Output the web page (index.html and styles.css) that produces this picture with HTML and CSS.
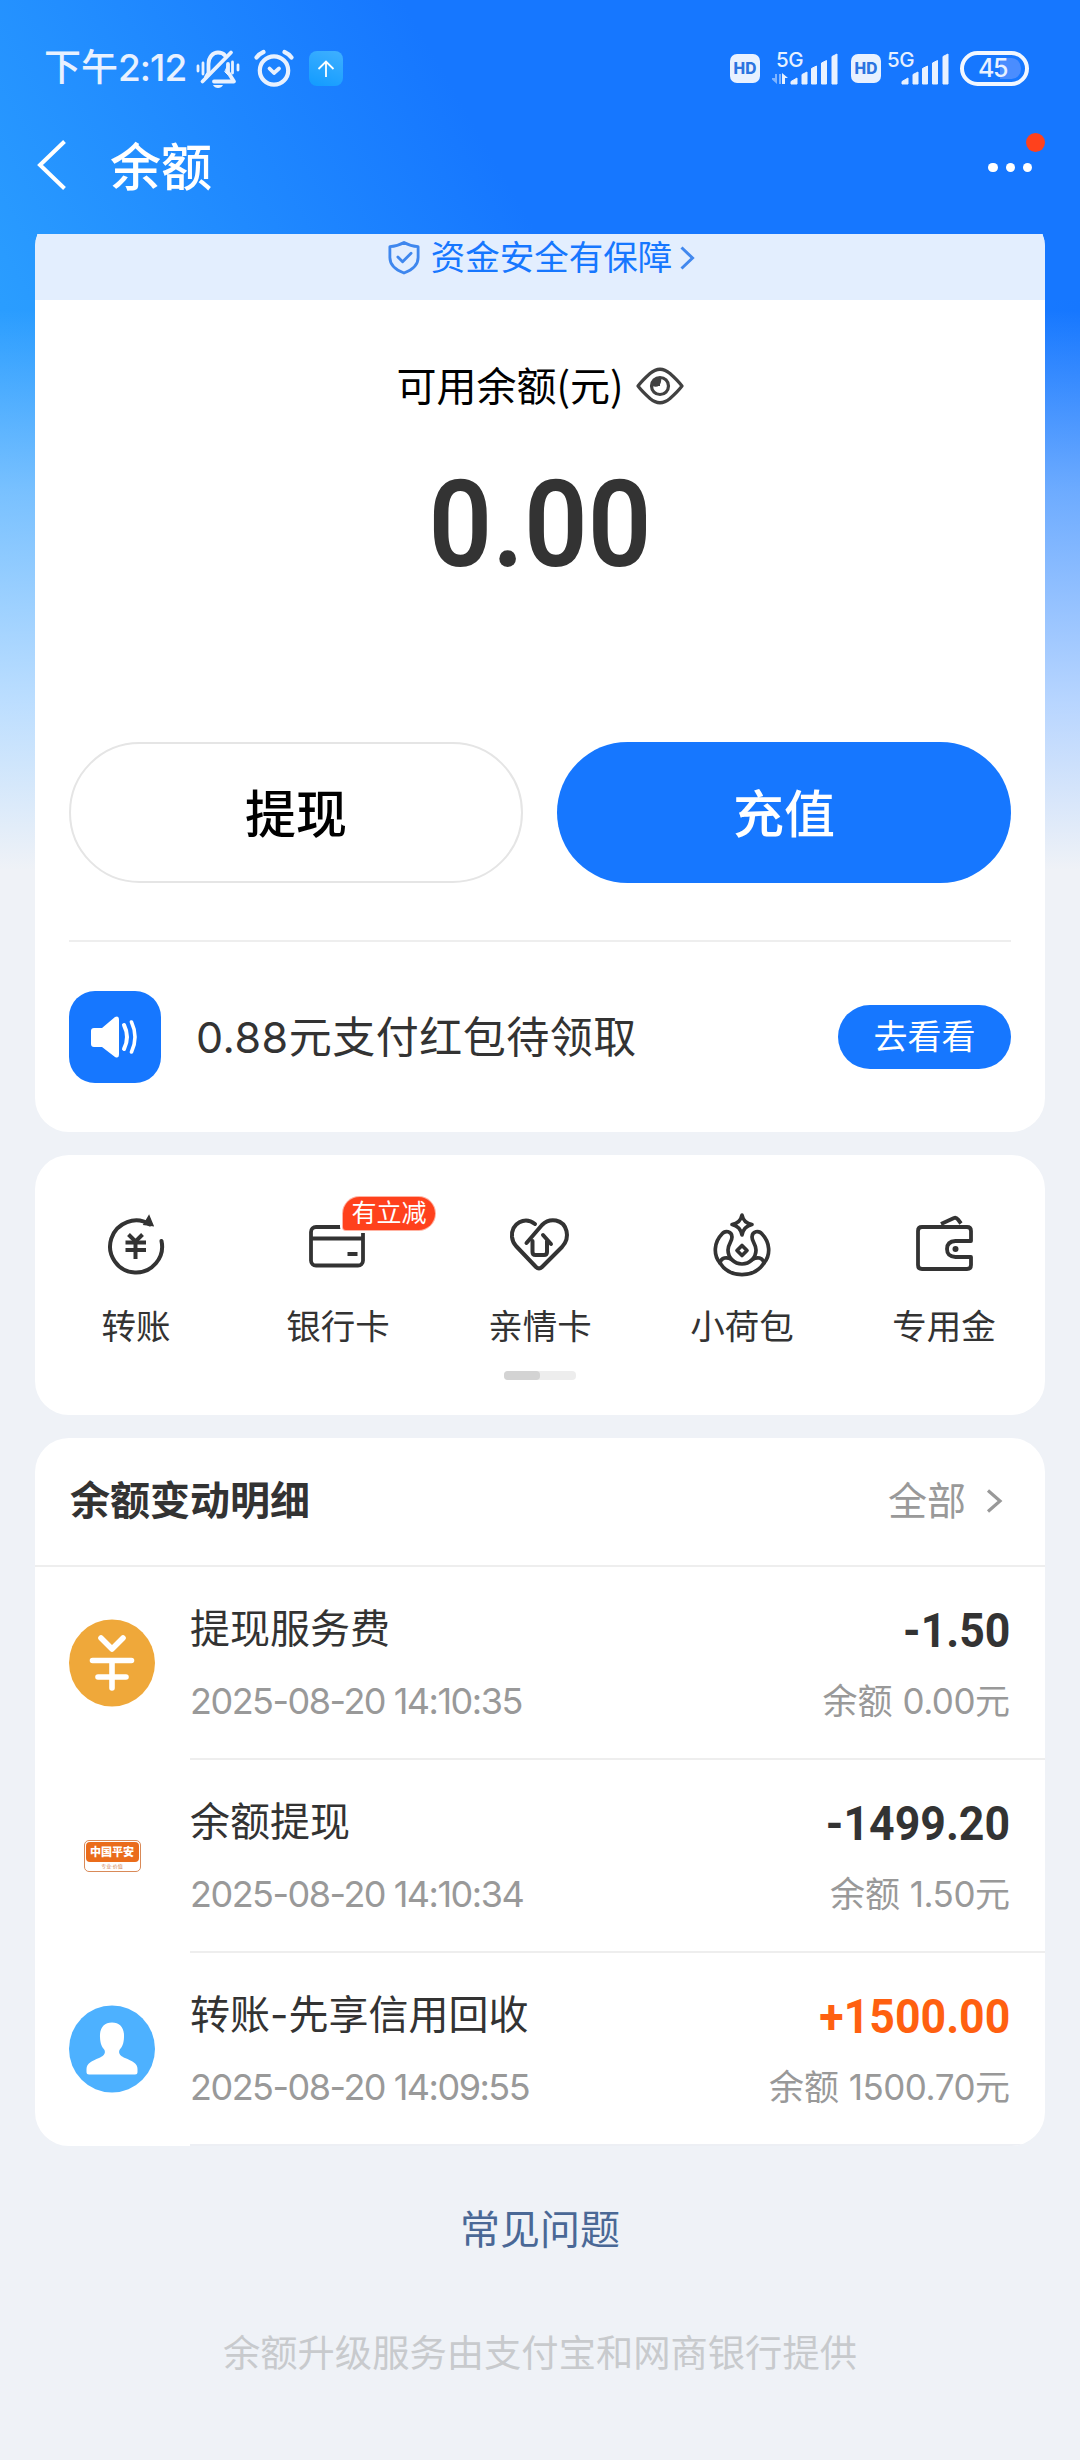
FILE: index.html
```html
<!DOCTYPE html>
<html lang="zh-CN">
<head>
<meta charset="utf-8">
<title>余额</title>
<link rel="stylesheet" href="styles.css">
</head>
<body>
<div class="screen">
  <header class="status">
    <div class="status-left">
      <span class="clock">下午<span class="clock-num">2:12</span></span>
      <svg class="i-bell" width="46" height="40" viewBox="0 0 46 40" fill="none" stroke="#e8f1ff" stroke-width="3.8" stroke-linecap="round" stroke-linejoin="round">
        <path d="M11 28 L13.500 24 V15 C13.500 8 18 3.500 23 3.500 C26 3.500 28.500 4.500 30 6.500 M33 15 V23 L39 32.500 H19"/>
        <path d="M36 3.500 L7.500 32.500"/>
        <path d="M18 36 H28 Q26.500 39 23 39 Q19.500 39 18 36Z" fill="#e8f1ff" stroke="none"/>
        <path d="M8 14 V25 M3 17 V22 M37.500 13 V24 M43 16 V21" stroke-width="2.800"/>
        <path d="M33 16 V26 L30 23 Z" fill="#e8f1ff" stroke-width="1"/>
      </svg>
      <svg class="i-alarm" width="40" height="40" viewBox="0 0 40 40" fill="none" stroke="#e8f1ff" stroke-width="4.2" stroke-linecap="round" stroke-linejoin="round">
        <circle cx="20" cy="21.500" r="14.200"/>
        <path d="M2.500 8.500 Q5 5 9.500 3 M37.500 8.500 Q35 5 30.500 3"/>
        <path d="M15.500 19.500 L20 24 L25 19.500" stroke-width="3.800"/>
      </svg>
      <span class="app-badge"><svg width="20" height="20" viewBox="0 0 20 20" fill="none" stroke="#fff" stroke-width="1.800"><path d="M10 18 V3 M2.500 10 L10 2.500 L17.500 10"/></svg></span>
    </div>
    <div class="status-right">
      <span class="hd">HD</span>
      <span class="net net-a"><span class="net-label">5G</span>
        <svg width="68" height="34" viewBox="0 0 68 34" fill="#e8f1ff">
          <path d="M5 22 V32 L0 27.500 V26 H3 V22Z" opacity=".5"/><path d="M7 22 h2 v10 h-2z" opacity=".5"/><path d="M10 21 L16 26 H13 V32 H10Z"/>
          <path d="M19 32 V29.500 L25 26 V32Z M30 32 V22.500 L35 20 V32Z M39.500 32 V16.500 L44.500 14 V32Z M49.500 32 V11 L54.500 8.500 V32Z M60 32 V4.500 L65 2 V32Z" stroke="#e8f1ff" stroke-width="1" stroke-linejoin="round"/>
        </svg>
      </span>
      <span class="hd">HD</span>
      <span class="net net-b"><span class="net-label">5G</span>
        <svg width="68" height="34" viewBox="0 0 68 34" fill="#e8f1ff">
          <path d="M19 32 V29.500 L25 26 V32Z M30 32 V22.500 L35 20 V32Z M39.500 32 V16.500 L44.500 14 V32Z M49.500 32 V11 L54.500 8.500 V32Z M60 32 V4.500 L65 2 V32Z" stroke="#e8f1ff" stroke-width="1" stroke-linejoin="round"/>
        </svg>
      </span>
      <span class="battery"><span class="battery-text">45</span></span>
    </div>
  </header>
  <nav class="nav">
    <svg class="back" width="30" height="50" viewBox="0 0 30 50" fill="none" stroke="#fff" stroke-width="4"><path d="M27.500 1.500 L3 25 L27.500 48.500"/></svg>
    <h1 class="nav-title">余额</h1>
    <span class="more"><i class="dot"></i><i class="dot"></i><i class="dot"></i><i class="red-dot"></i></span>
  </nav>
  <main class="content">
    <section class="card balance">
      <div class="banner">
        <svg width="32" height="35" viewBox="0 0 34 36" fill="none" stroke="#3f87ee" stroke-width="3" stroke-linejoin="round"><path d="M17 2 Q24 6 32 6.500 V18 C32 26 25 31.500 17 34.500 C9 31.500 2 26 2 18 V6.500 Q10 6 17 2Z"/><path d="M10.500 17.500 L15.500 22.500 L24.500 13.500" stroke-linecap="round"/></svg>
        <span class="banner-text">资金安全有保障</span>
        <svg class="banner-arrow" width="15" height="24" viewBox="0 0 15 24" fill="none" stroke="#4288ee" stroke-width="3"><path d="M1.500 1.500 L12.500 12 L1.500 22.500"/></svg>
      </div>
      <div class="label-row">
        <span class="label">可用余额(元)</span>
        <svg width="48" height="38" viewBox="0 0 48 38" fill="none" stroke="#414141" stroke-width="3.200" stroke-linejoin="round"><path d="M2 19 C5 15 9 11 14 6.500 Q24 -2 34 6.500 C39 11 43 15 46 19 C43 23 39 27 34 31.500 Q24 40 14 31.500 C9 27 5 23 2 19Z"/><circle cx="24" cy="19" r="8.500"/><path d="M24 11 V19 H16 A8 8 0 0 1 24 11Z" fill="#414141" stroke="none"/><path d="M17 18 Q24 20 24 12" stroke-width="2.500"/></svg>
      </div>
      <div class="amount">0.00</div>
      <div class="buttons">
        <a class="btn btn-line">提现</a>
        <a class="btn btn-fill">充值</a>
      </div>
      <div class="notice">
        <span class="horn"><svg width="50" height="46" viewBox="0 0 50 46" fill="none" stroke="#fff"><path d="M4 14 H12 L25 3 Q29 1 29 6 V40 Q29 45 25 43 L12 33 H4 Q1 33 1 30 V17 Q1 14 4 14Z" fill="#fff" stroke="none"/><path d="M34 11 Q40 23 34 35" stroke-width="4" stroke-linecap="round"/><path d="M41.500 8 Q48.500 23 41.500 38" stroke-width="3.600" stroke-linecap="round"/></svg></span>
        <span class="notice-text">0.88元支付红包待领取</span>
        <a class="pill">去看看</a>
      </div>
    </section>

    <section class="card tools">
      <div class="tool-row">
        <div class="tool">
          <svg width="64" height="64" viewBox="0 0 64 64" fill="none" stroke="#333" stroke-width="4" stroke-linecap="round"><path d="M57.500 28 A26 26 0 1 1 46 11.500"/><path d="M45 3 L49 12.500 L40 11.500Z" fill="#333" stroke-width="1.500"/><path d="M24.500 21.500 L31.500 28.500 L38.500 21.500 M31.500 28 V46" stroke-linecap="butt"/><path d="M21.500 29.500 H42 M21.500 37 H42" stroke-linecap="butt"/></svg>
          <span>转账</span>
        </div>
        <div class="tool">
          <svg width="64" height="64" viewBox="0 0 64 64" fill="none" stroke="#333" stroke-width="3.800"><rect x="5" y="14" width="52" height="38.500" rx="5"/><path d="M5 25.500 H57"/><path d="M41.500 41 H51.500" stroke-width="4"/></svg>
          <span>银行卡</span>
          <b class="tag">有立减</b>
        </div>
        <div class="tool">
          <svg width="64" height="64" viewBox="0 0 64 64" fill="none" stroke="#333" stroke-width="4" stroke-linecap="round" stroke-linejoin="round"><path d="M27 11 C17 3 3 10 4 24 Q4.500 29 8 33 L28 54 Q31 57 34 54 L54 34 C63 24 59 10 48 7.500 Q40 6 34 12 L18.500 30"/><path d="M35 22 L43 31 M24.500 28 V39 Q24.500 42 27.500 42 H36 Q39 42 39 39 V28"/></svg>
          <span>亲情卡</span>
        </div>
        <div class="tool">
          <svg width="64" height="66" viewBox="0 0 64 66" fill="none" stroke="#333" stroke-width="3.700" stroke-linecap="round" stroke-linejoin="round"><path d="M32 3 Q33.500 11 42 12.500 Q33.500 14.500 32 23 Q30.500 14.500 22 12.500 Q30.500 11 32 3Z"/><path d="M22 25 C22 19 15 18 12 22 C4 30 3 43 10 51 C20 66.500 44 66.500 54 51 C61 43 60 30 52 22 C49 18 42 19 42 25 C42 30 46 32 46 38 A14 14 0 0 1 18 38 C18 32 22 30 22 25Z" stroke="none"/><path d="M22 25 C22 19 15 18 12 22 C4 30 3 43 10 51 C20 66.500 44 66.500 54 51 C61 43 60 30 52 22 C49 18 42 19 42 25 C42 30 46 32 46 38 A14 14 0 0 1 18 38 C18 32 22 30 22 25Z"/><path d="M10 51 C11 45.500 17 44.500 21.500 47.500 M54 51 C53 45.500 47 44.500 42.500 47.500"/><path d="M32 33.500 L37 38.500 L32 43.500 L27 38.500Z"/></svg>
          <span>小荷包</span>
        </div>
        <div class="tool">
          <svg width="64" height="64" viewBox="0 0 64 64" fill="none" stroke="#333" stroke-width="3.800" stroke-linejoin="round"><path d="M59 28 H43.500 Q35 28.500 35 36 Q35 43.500 43.500 44 H59 V52 Q59 56 55 56 H10 Q6 56 6 52 V18 Q6 14 10 14 H55 Q59 14 59 18Z"/><path d="M29 11 L42 5 Q44 4 46 6.500 L49 10.500"/><circle cx="43.500" cy="36" r="3" fill="#333" stroke="none"/></svg>
          <span>专用金</span>
        </div>
      </div>
      <div class="pager"><i></i></div>
    </section>

    <section class="card history">
      <div class="history-head">
        <h2>余额变动明细</h2>
        <span class="all">全部<svg width="17" height="24" viewBox="0 0 17 24" fill="none" stroke="#999" stroke-width="3.200"><path d="M2 1.500 L14 12 L2 22.500"/></svg></span>
      </div>
      <div class="item">
        <svg class="avatar" width="86" height="90" viewBox="0 0 86 90"><ellipse cx="43" cy="45" rx="43" ry="43.500" fill="#efa83a"/><path d="M32 20 L43 31 L54 20 M23.500 42.500 H62.500 M29 59 H57 M43 43 V70" fill="none" stroke="#fff" stroke-width="5.600" stroke-linecap="round" stroke-linejoin="round"/></svg>
        <div class="item-body">
          <div class="line1"><span>提现服务费</span><span class="sum">-1.50</span></div>
          <div class="line2"><span class="time">2025-08-20 14:10:35</span><span>余额 <span class="num">0.00</span>元</span></div>
        </div>
      </div>
      <div class="item">
        <div class="avatar bank"><div class="bank-card"><span class="bank-name">中国平安</span><span class="bank-sub">专业·价值</span></div></div>
        <div class="item-body">
          <div class="line1"><span>余额提现</span><span class="sum">-1499.20</span></div>
          <div class="line2"><span class="time">2025-08-20 14:10:34</span><span>余额 <span class="num">1.50</span>元</span></div>
        </div>
      </div>
      <div class="item">
        <svg class="avatar" width="86" height="90" viewBox="0 0 86 90"><ellipse cx="43" cy="45" rx="43" ry="43.500" fill="#4db1ff"/><path d="M43 18.500 C51 18.500 55.500 24 55 33 C54.800 40 53 43 50.500 46 C49 50 52 52 56 54 C63 57 68.500 59 68.500 65 V68 Q68.500 70.500 66 70.500 H20 Q17.500 70.500 17.500 68 V65 C17.500 59 23 57 30 54 C34 52 37 50 35.500 46 C33 43 31.200 40 31 33 C30.500 24 35 18.500 43 18.500Z" fill="#fff"/></svg>
        <div class="item-body">
          <div class="line1"><span>转账-先享信用回收</span><span class="sum income">+1500.00</span></div>
          <div class="line2"><span class="time">2025-08-20 14:09:55</span><span>余额 <span class="num">1500.70</span>元</span></div>
        </div>
      </div>
    </section>
    <a class="faq">常见问题</a>
    <p class="provider">余额升级服务由支付宝和网商银行提供</p>
  </main>
</div>
</body>
</html>
```
FILE: styles.css
```css
* { box-sizing: border-box; }
body {
  margin: 0;
  background: #eff2f7;
  font-family: Inter, "Noto Sans CJK SC", sans-serif;
  color: #333;
}
h1, h2, p { margin: 0; }
svg { display: block; flex: none; }
.screen {
  width: 1080px;
  height: 2460px;
  overflow: hidden;
  background-color: #eff2f7;
  background-image:
    linear-gradient(to bottom, rgba(225,241,255,0) 310px, rgba(228,242,255,.42) 490px, rgba(233,242,255,.76) 700px, #eff2f7 870px),
    linear-gradient(60deg, #2a9dff 0%, #1677ff 46%),
    linear-gradient(to right, #2a9dff, #1677ff);
  background-size: 100% 870px, 100% 300px, 100% 870px;
  background-repeat: no-repeat;
}

/* status bar */
.status {
  height: 101px;
  padding: 49px 51px 0 44px;
  display: flex;
  justify-content: space-between;
  color: #e8f1ff;
}
.status-left, .status-right { display: flex; align-items: flex-start; }
.clock { font-size: 37px; line-height: 40px; margin-top: -1px; font-weight: 500; width: 151px; white-space: nowrap; }
.clock-num { letter-spacing: -1px; }
.i-alarm { margin-left: 13px; }
.app-badge {
  width: 34px; height: 35px; margin: 2px 0 0 15px; border-radius: 8px;
  background: linear-gradient(20deg, #129bff, #3fb0ff);
  display: flex; align-items: center; justify-content: center;
}
.hd {
  width: 30px; height: 29px; margin-top: 5px; border-radius: 7px;
  background: #e8f1ff; color: #2b74e0;
  font: 800 15.500px/29px Inter, sans-serif; text-align: center;
}
.net { position: relative; width: 68px; height: 37px; padding-top: 3px; }
.net-a { margin-left: 12px; margin-right: 11px; }
.net-b { margin-left: 2px; margin-right: 9px; }
.net-label { position: absolute; left: 4px; top: 2px; font: 500 20.500px/17px Inter, sans-serif; letter-spacing: -.5px; }
.battery {
  width: 69px; height: 35px; margin-top: 2px; border-radius: 18px; border: 4px solid #f2f7ff;
  padding: 3px 4px 3px 0; display: flex; justify-content: center; align-items: center;
  background: linear-gradient(to right, transparent 0 36px, #4a8dff 36px) content-box;
}
.battery-text { font: 500 25px/27px Inter, sans-serif; letter-spacing: -1.500px; color: #e8f1ff; }

/* navigation */
.nav { height: 133px; padding: 0 48px 0 37px; display: flex; align-items: center; }
.back { margin-top: -5px; }
.nav-title { margin-left: 43px; font-size: 51px; line-height: 60px; font-weight: 500; color: #fff; flex: 1; }
.more { position: relative; display: flex; gap: 8px; }
.dot { width: 9.200px; height: 9.200px; border-radius: 50%; background: #fff; }
.red-dot { position: absolute; width: 19px; height: 19px; right: -13px; top: -30px; border-radius: 50%; background: #ff411c; }

/* cards */
.content { overflow: hidden; height: 2226px; padding: 0 35px; }
.card { background: #fff; border-radius: 34px; overflow: hidden; margin-bottom: 23px; }
.balance { margin-top: -21px; height: 919px; }
.banner {
  height: 87px; padding: 22px 0 20px 3px; background: #e3eefe; color: #1677ff;
  display: flex; align-items: center; justify-content: center; gap: 11px;
}
.banner-text { font-size: 34.500px; line-height: 46px; }
.banner-arrow { margin-left: -3px; }
.label-row { margin-top: 61px; height: 48px; display: flex; align-items: center; justify-content: center; gap: 12px; color: #000; }
.label { font: 40px/46px "Noto Sans CJK SC", sans-serif; padding-bottom: 2px; }
.label-row svg { margin-top: 2px; }
.amount { margin-top: 51px; height: 130px; text-align: center; font: 600 120px/130px Roboto, sans-serif; transform: scaleX(.93); }
.buttons { margin-top: 152px; padding: 0 34px; display: grid; grid-template-columns: 1fr 1fr; gap: 34px; }
.btn { height: 141px; border-radius: 71px; font-size: 51px; font-weight: 500; line-height: 146px; text-align: center; }
.btn-line { border: 2px solid #e5e5e5; line-height: 142px; color: #000; }
.btn-fill { background: #1677ff; color: #fff; }
.notice { margin: 57px 34px 0; border-top: 2px solid #eee; height: 192px; display: flex; align-items: center; }
.horn { width: 92px; height: 92px; border-radius: 26px; background: #1677ff; display: flex; align-items: center; justify-content: center; }
.notice-text { margin-left: 35px; font-size: 43px; line-height: 56px; letter-spacing: .5px; flex: 1; }
.pill { width: 173px; height: 64px; border-radius: 32px; background: #1677ff; color: #fff; font-size: 34px; line-height: 64px; text-align: center; }

/* shortcuts */
.tools { height: 260px; padding-top: 57px; }
.tool-row { display: grid; grid-template-columns: repeat(5, 202px); height: 139px; }
.tool { position: relative; display: flex; flex-direction: column; align-items: center; font-size: 34.500px; line-height: 46px; }
.tool svg { height: 66px; margin-bottom: 26px; }
.tag {
  position: absolute; left: 106px; top: -15px; width: 92px; height: 33px;
  border-radius: 17px 17px 17px 3px; background: #ff411c; box-shadow: 0 0 0 1px #ffb3a3, 0 0 0 3px #fff;
  color: #fff; font-size: 25px; font-weight: 400; line-height: 32px; text-align: center;
}
.pager { width: 72px; height: 9px; margin: 20px auto 0; border-radius: 4px; background: #ededed; }
.pager i { display: block; width: 36px; height: 9px; border-radius: 4px; background: #d3d3d3; }

/* history */
.history { height: 708px; margin-bottom: 0; }
.history-head { height: 129px; padding: 0 42px 2px 35px; border-bottom: 2px solid #eee; display: flex; align-items: center; justify-content: space-between; }
.history-head h2 { font-size: 40px; line-height: 50px; font-weight: 700; }
.all { display: flex; align-items: center; gap: 20px; font-size: 39px; line-height: 50px; color: #999; }
.item { height: 193px; padding-left: 34px; display: flex; align-items: center; }
.avatar { width: 86px; flex: none; margin-top: -1px; }
.item-body { margin-left: 35px; flex: 1; height: 193px; padding: 34px 35px 0 0; border-bottom: 2px solid #eee; }
.item:last-child .item-body { border-bottom-color: #edeff4; }
.line1, .line2 { display: flex; justify-content: space-between; align-items: center; white-space: nowrap; }
.line1 { height: 56px; font-size: 40px; line-height: 56px; }
.line2 { height: 50px; margin-top: 19px; font-size: 35px; line-height: 50px; color: #999; }
.time { font-size: 36px; letter-spacing: -1.500px; }
.num { letter-spacing: -.5px; }
.sum { font: 700 48px/56px Roboto, sans-serif; padding-top: 3px; transform: scaleX(.93); transform-origin: right center; }
.income { color: #ff6010; }
.bank { display: flex; justify-content: center; }
.bank-card { width: 57px; height: 32px; border: 1px solid #d98a58; border-radius: 5px; padding: 1px; display: flex; flex-direction: column; align-items: center; }
.bank-name { width: 100%; height: 21px; border-radius: 4px; background: #ea6c1b; color: #fff; font-size: 11px; font-weight: 900; line-height: 20px; text-align: center; }
.bank-sub { font-size: 5px; line-height: 8px; color: #d08050; }
.faq { display: block; margin-top: 56px; text-align: center; font-size: 40px; line-height: 56px; color: #4a6896; }
.provider { margin-top: 71px; text-align: center; font-size: 37.300px; line-height: 50px; color: #c8cacd; }
```
